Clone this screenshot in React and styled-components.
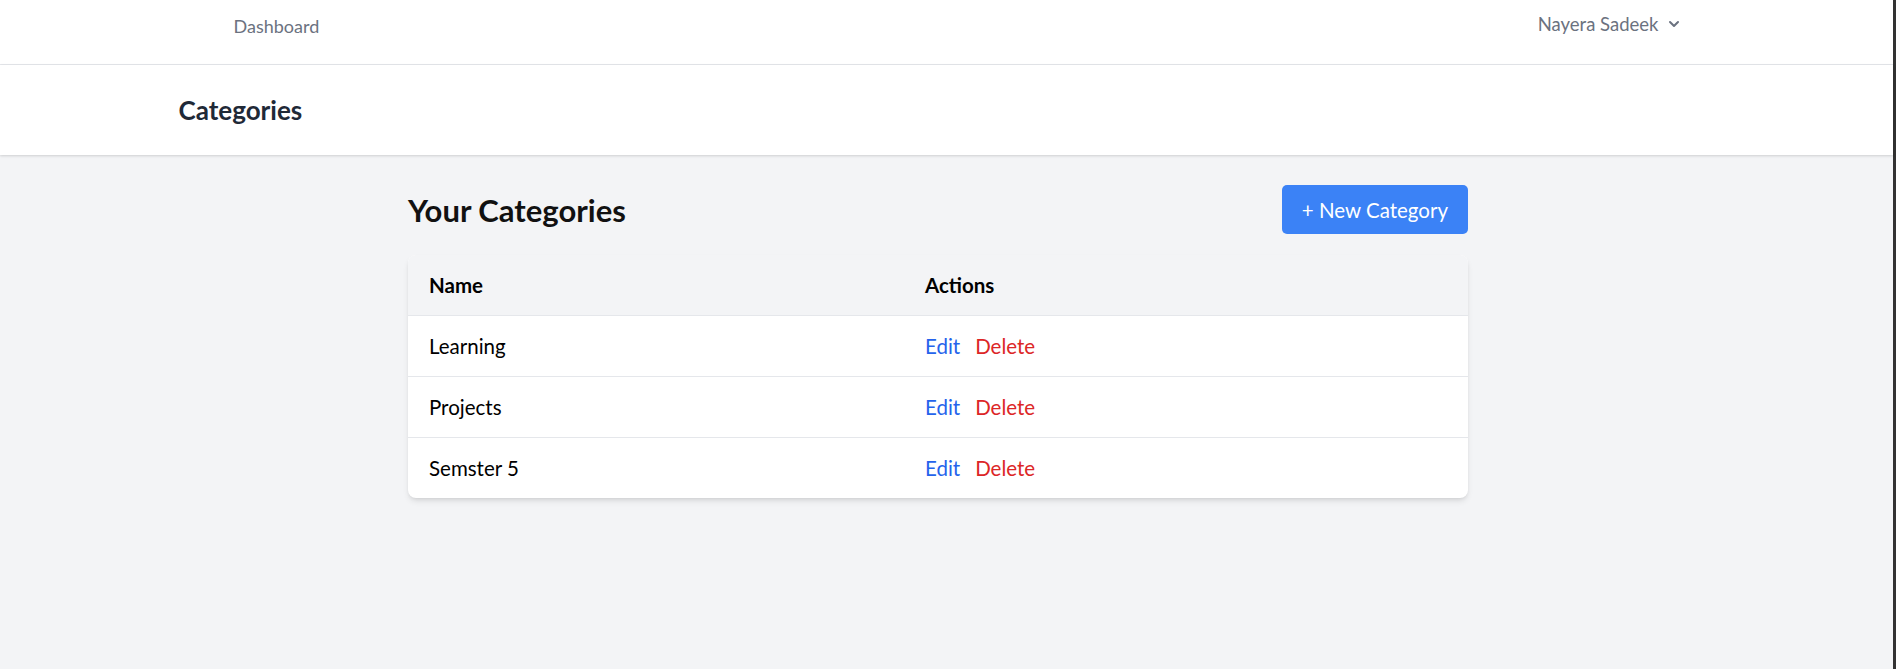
import React from 'react';
import styled, { createGlobalStyle } from 'styled-components';

const GlobalStyle = createGlobalStyle`
  html, body {
    margin: 0;
    padding: 0;
  }
  body {
    font-family: Lato, "Noto Sans", sans-serif;
    background: #f3f4f6;
    -webkit-font-smoothing: antialiased;
  }
`;

const Shell = styled.div`
  display: flex;
  min-height: 100vh;
`;

const Page = styled.div`
  flex: 1;
  background: #f3f4f6;
`;

const WindowEdge = styled.div`
  width: 3px;
  background: #333333;
`;

const Nav = styled.nav`
  height: 64px;
  background: #ffffff;
  border-bottom: 1px solid #e5e7eb;
`;

const Container = styled.div`
  width: 1536px;
  margin: 0 auto;
  display: flex;
  height: 100%;
`;

const NavInner = styled(Container)`
  justify-content: space-between;
  padding: 0 31px 0 55px;
  box-sizing: border-box;
`;

const NavLink = styled.a`
  padding-top: 14px;
  font-size: 18px;
  line-height: 24px;
  color: #6b7280;
  text-decoration: none;
`;

const UserButton = styled.button`
  display: flex;
  align-items: flex-start;
  gap: 5px;
  padding: 12px 0 0;
  border: 0;
  background: none;
  font-family: inherit;
  font-size: 18.5px;
  line-height: 24px;
  color: #6b7280;
  cursor: pointer;

  svg {
    margin-top: 2px;
  }
`;

const Header = styled.header`
  background: #ffffff;
  box-shadow: 0 1px 3px rgba(0, 0, 0, 0.1), 0 1px 2px rgba(0, 0, 0, 0.06);
  position: relative;
`;

const HeaderInner = styled(Container)`
  padding: 30px 0;
`;

const PageTitle = styled.h2`
  margin: 0;
  font-size: 26px;
  line-height: 30px;
  font-weight: 700;
  color: #1f2937;
`;

const Main = styled.main`
  padding: 30px 17px 0 0;
`;

const Content = styled.div`
  width: 1060px;
  margin: 0 auto;
`;

const TopRow = styled.div`
  display: flex;
  justify-content: space-between;
  align-items: center;
  margin-bottom: 21px;
`;

const SectionTitle = styled.h1`
  margin: 0;
  font-size: 31px;
  line-height: 40px;
  font-weight: 700;
  color: #111111;
`;

const PrimaryButton = styled.button`
  height: 49px;
  padding: 0 20px;
  border: 0;
  border-radius: 5px;
  background: #3b82f6;
  color: #ffffff;
  font-family: inherit;
  font-size: 20.5px;
  cursor: pointer;
`;

const Card = styled.div`
  background: #ffffff;
  border-radius: 8px;
  overflow: hidden;
  box-shadow: 0 4px 6px -1px rgba(0, 0, 0, 0.1), 0 2px 4px -2px rgba(0, 0, 0, 0.1);
`;

const Table = styled.table`
  width: 100%;
  border-collapse: collapse;
`;

const HeadCell = styled.th`
  height: 60px;
  padding: 0 21px;
  background: #f3f4f6;
  border-bottom: 1px solid #e5e7eb;
  text-align: left;
  font-size: 20.5px;
  font-weight: 700;
  color: #000000;
  width: ${(p) => (p.$first ? '454px' : 'auto')};
`;

const Row = styled.tr`
  & + & td {
    border-top: 1px solid #e5e7eb;
  }
`;

const Cell = styled.td`
  height: 60px;
  padding: 0 21px;
  font-size: 20.5px;
  color: #000000;
`;

const Actions = styled.div`
  display: flex;
  gap: 15px;
`;

const ActionLink = styled.a`
  font-size: 20.5px;
  color: ${(p) => (p.$danger ? '#dc2626' : '#2563eb')};
  text-decoration: none;
  cursor: pointer;
`;

const categories = ['Learning', 'Projects', 'Semster 5'];

function Chevron() {
  return (
    <svg width="20" height="20" viewBox="0 0 20 20" fill="currentColor">
      <path
        fillRule="evenodd"
        d="M5.293 7.293a1 1 0 011.414 0L10 10.586l3.293-3.293a1 1 0 111.414 1.414l-4 4a1 1 0 01-1.414 0l-4-4a1 1 0 010-1.414z"
        clipRule="evenodd"
      />
    </svg>
  );
}

export default function App() {
  return (
    <>
      <GlobalStyle />
      <Shell>
        <Page>
          <Nav>
            <NavInner>
              <NavLink href="#">Dashboard</NavLink>
              <UserButton>
                Nayera Sadeek
                <Chevron />
              </UserButton>
            </NavInner>
          </Nav>

          <Header>
            <HeaderInner>
              <PageTitle>Categories</PageTitle>
            </HeaderInner>
          </Header>

          <Main>
            <Content>
              <TopRow>
                <SectionTitle>Your Categories</SectionTitle>
                <PrimaryButton>+ New Category</PrimaryButton>
              </TopRow>

              <Card>
                <Table>
                  <thead>
                    <tr>
                      <HeadCell $first>Name</HeadCell>
                      <HeadCell>Actions</HeadCell>
                    </tr>
                  </thead>
                  <tbody>
                    {categories.map((name) => (
                      <Row key={name}>
                        <Cell>{name}</Cell>
                        <Cell>
                          <Actions>
                            <ActionLink>Edit</ActionLink>
                            <ActionLink $danger>Delete</ActionLink>
                          </Actions>
                        </Cell>
                      </Row>
                    ))}
                  </tbody>
                </Table>
              </Card>
            </Content>
          </Main>
        </Page>
        <WindowEdge />
      </Shell>
    </>
  );
}
